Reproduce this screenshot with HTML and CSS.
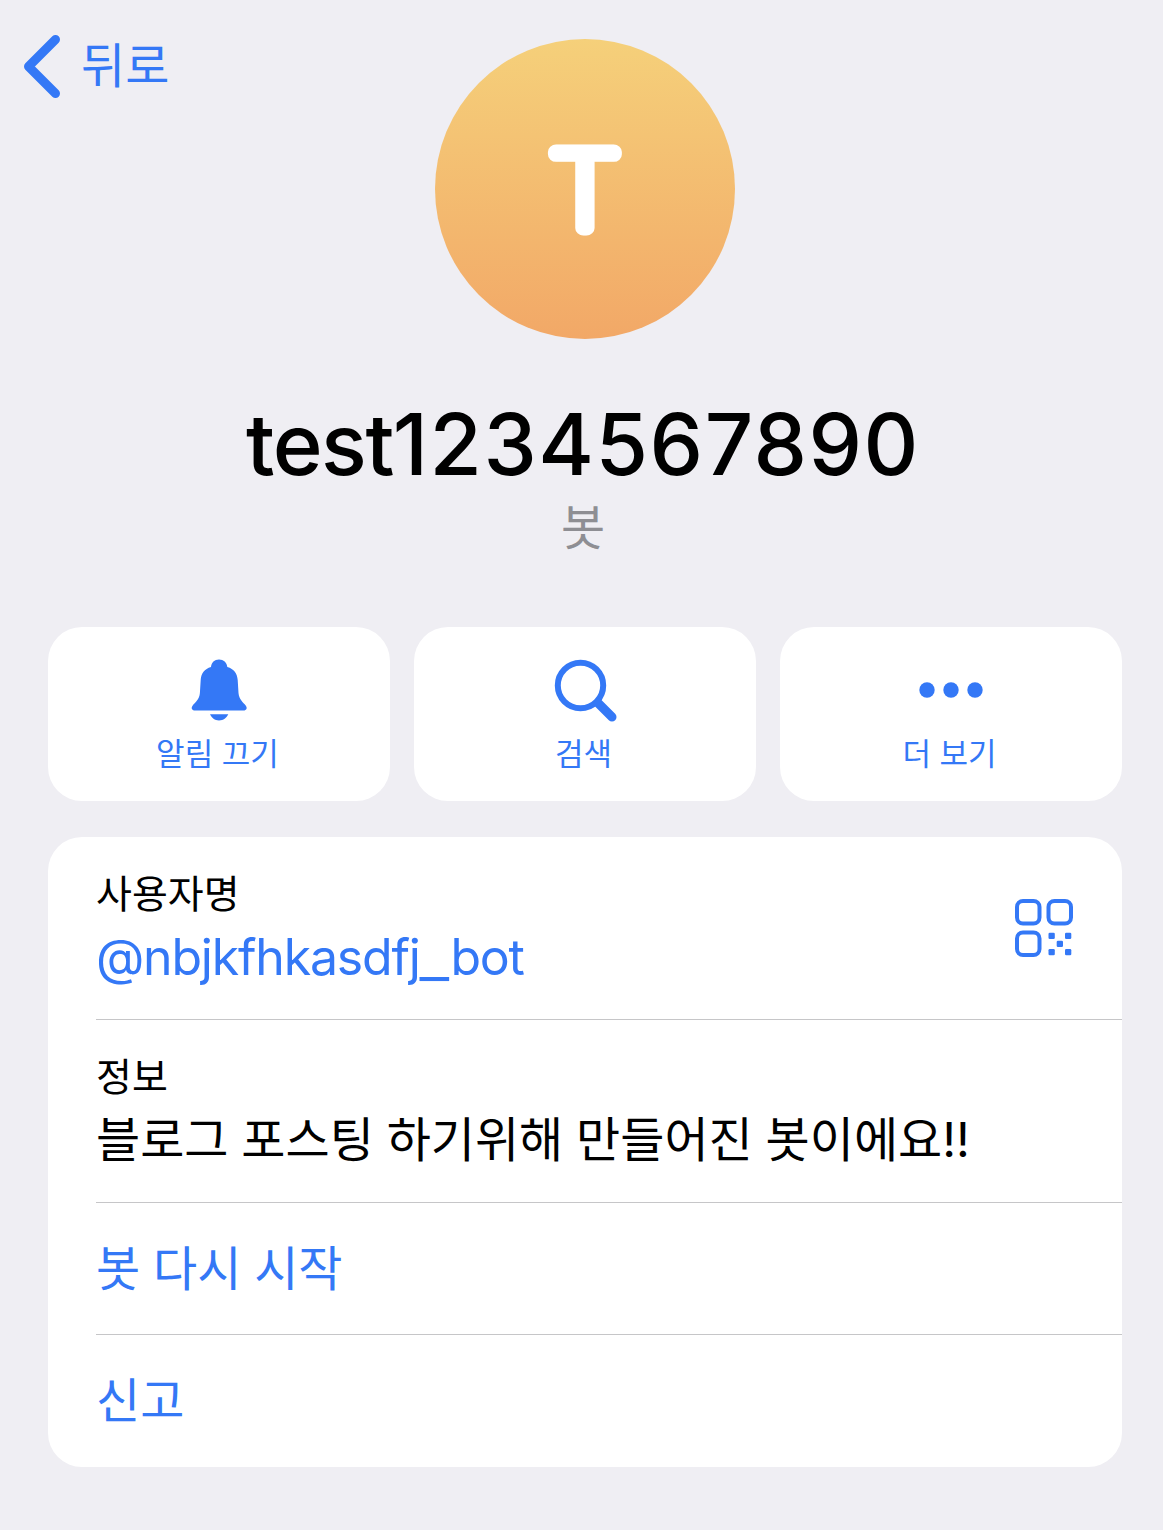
FILE: index.html
```html
<!DOCTYPE html>
<html lang="ko">
<head>
<meta charset="utf-8">
<title>test1234567890</title>
<link rel="stylesheet" href="styles.css">
</head>
<body>
<header class="top">
  <a class="back">
    <svg class="chevron" width="36" height="64" viewBox="0 0 36 64"><path d="M31.500 5.500L4.500 32.500L31.500 59.500"/></svg>
    <span class="back-label">뒤로</span>
  </a>
  <svg class="avatar" width="300" height="300" viewBox="0 0 300 300">
    <defs><linearGradient id="sun" x1="0" y1="0" x2="0" y2="1"><stop offset="0" stop-color="#f5d07a"/><stop offset="1" stop-color="#f2a867"/></linearGradient></defs>
    <circle cx="150" cy="150" r="150" fill="url(#sun)"/>
    <text class="initial" transform="translate(150 188.500) scale(1.110 1)" text-anchor="middle">T</text>
  </svg>
</header>
<section class="identity">
  <h1 class="name">test<span class="digits">1234567890</span></h1>
  <p class="kind">봇</p>
</section>
<main class="content">
  <nav class="actions">
    <button class="action">
      <svg class="icon" width="72" height="72" viewBox="0 0 72 72"><path d="M36 4.500C31.500 4.500 28.300 7.600 28 12C21.500 14 18 18.500 17.700 25L16.900 38C16.500 44.500 12 47.500 9.700 50.500C7.800 53 8.800 55.500 12 55.500H60.500C63.600 55.500 64.600 53 62.700 50.500C60.300 47.500 56 44.500 55.500 38L54.700 25C54.300 18.500 51 14 44.300 12C44 7.600 40.500 4.500 36 4.500ZM27 59.300H45.300C43.500 63 40.500 65.500 36 65.500C31.800 65.500 28.700 63 27 59.300Z"/></svg>
      <span class="action-label">알림 끄기</span>
    </button>
    <button class="action">
      <svg class="icon line" width="72" height="72" viewBox="0 0 72 72"><circle cx="31.500" cy="30.500" r="22.700"/><path class="handle" d="M49 48L63 62"/></svg>
      <span class="action-label">검색</span>
    </button>
    <button class="action">
      <svg class="icon" width="72" height="72" viewBox="0 0 72 72"><circle cx="12" cy="35" r="7.700"/><circle cx="36" cy="35" r="7.700"/><circle cx="60" cy="35" r="7.700"/></svg>
      <span class="action-label">더 보기</span>
    </button>
  </nav>
  <section class="card">
    <div class="row tall">
      <div class="field">
        <span class="label">사용자명</span>
        <a class="handle-name">@nbjkfhkasdfj<span class="underscore">_</span>bot</a>
      </div>
      <svg class="qr" width="58" height="58" viewBox="0 0 58 58">
        <g class="frames"><rect x="2" y="2" width="22.500" height="22.500" rx="6"/><rect x="33.500" y="2" width="22.500" height="22.500" rx="6"/><rect x="2" y="33.500" width="22.500" height="22.500" rx="6"/></g>
        <rect x="33.500" y="33.700" width="6.300" height="6.300" rx="1.300"/><rect x="50" y="33.700" width="6.300" height="6.300" rx="1.300"/><rect x="41.700" y="41.800" width="6.300" height="6.300" rx="1.300"/><rect x="33.500" y="50" width="6.300" height="6.300" rx="1.300"/><rect x="50" y="50" width="6.300" height="6.300" rx="1.300"/>
      </svg>
    </div>
    <div class="row tall">
      <div class="field info">
        <span class="label">정보</span>
        <span class="about">블로그 포스팅 하기위해 만들어진 봇이에요<span class="bangs">!!</span></span>
      </div>
    </div>
    <div class="row"><a class="command">봇 다시 시작</a></div>
    <div class="row last"><a class="command">신고</a></div>
  </section>
</main>
</body>
</html>
```

FILE: styles.css
```css
* { box-sizing: border-box; }

body {
  margin: 0;
  min-height: 1530px;
  background: #efeef3;
  color: #000;
  font-family: Inter, "Noto Sans CJK KR", sans-serif;
}

.top {
  display: grid;
  grid-template-columns: 435px 300px 1fr;
  align-items: start;
  padding-top: 34px;
}

.back {
  display: flex;
  align-items: center;
  gap: 21px;
  height: 64px;
  padding-left: 24px;
  color: #3478f6;
}

.chevron { fill: none; stroke: #3478f6; stroke-width: 9; stroke-linecap: round; stroke-linejoin: round; }

.back-label { margin-bottom: 8px; font: 48px/56px "Noto Sans CJK KR", sans-serif; }

.avatar { display: block; margin-top: 5px; }

.initial {
  font-family: Inter, sans-serif;
  font-size: 105px;
  font-weight: 100;
  fill: #fff;
  stroke: #fff;
  stroke-width: 15px;
  stroke-linejoin: round;
}

.identity { padding: 56px 0 0; width: 1163px; text-align: center; }

.name { margin: 0; padding-left: 3px; font-size: 85px; line-height: 100px; font-weight: 500; letter-spacing: -1.5px; }

.digits { letter-spacing: 1.5px; }

.kind { margin: 0; padding-left: 3px; font: 48px/58px "Noto Sans CJK KR", sans-serif; color: #8e8e93; }

.content {
  display: flex;
  flex-direction: column;
  gap: 36px;
  width: 1074px;
  margin: 74px 0 0 48px;
}

.actions { display: grid; grid-template-columns: repeat(3, 1fr); gap: 24px; }

.action {
  display: flex;
  flex-direction: column;
  align-items: center;
  height: 174px;
  padding: 28px 0 0;
  border: 0;
  border-radius: 34px;
  background: #fff;
  color: #3478f6;
}

.icon { fill: #3478f6; }

.line { fill: none; stroke: #3478f6; stroke-width: 6; }

.handle { stroke-width: 9; stroke-linecap: round; }

.action-label { font: 31px/50px "Noto Sans CJK KR", sans-serif; padding-right: 3px; }

.card { height: 630px; border-radius: 34px; background: #fff; }

.row {
  display: flex;
  align-items: center;
  justify-content: space-between;
  height: 132px;
  margin-left: 48px;
  border-bottom: 1px solid #c6c6c8;
}

.tall { height: 183px; padding-right: 49px; }

.last { border-bottom: 0; }

.field { display: flex; flex-direction: column; padding-bottom: 8px; }

.info { padding-bottom: 4px; }

.label { font: 39px/58px "Noto Sans CJK KR", sans-serif; }

.handle-name { margin-bottom: -4px; padding-top: 4px; font-size: 50px; line-height: 66px; letter-spacing: -1.2px; color: #3478f6; }

.underscore { display: inline-block; margin: 0 5px 0 3px; transform: translateY(2px) scaleX(1.3); letter-spacing: 0; }

.about, .command { font: 48px/66px "Noto Sans CJK KR", sans-serif; word-spacing: -0.6px; }

.bangs { font-family: Inter, sans-serif; }

.command { padding-bottom: 8px; color: #3478f6; }

.qr { fill: #3478f6; }

.frames { fill: none; stroke: #3478f6; stroke-width: 4; }
```
